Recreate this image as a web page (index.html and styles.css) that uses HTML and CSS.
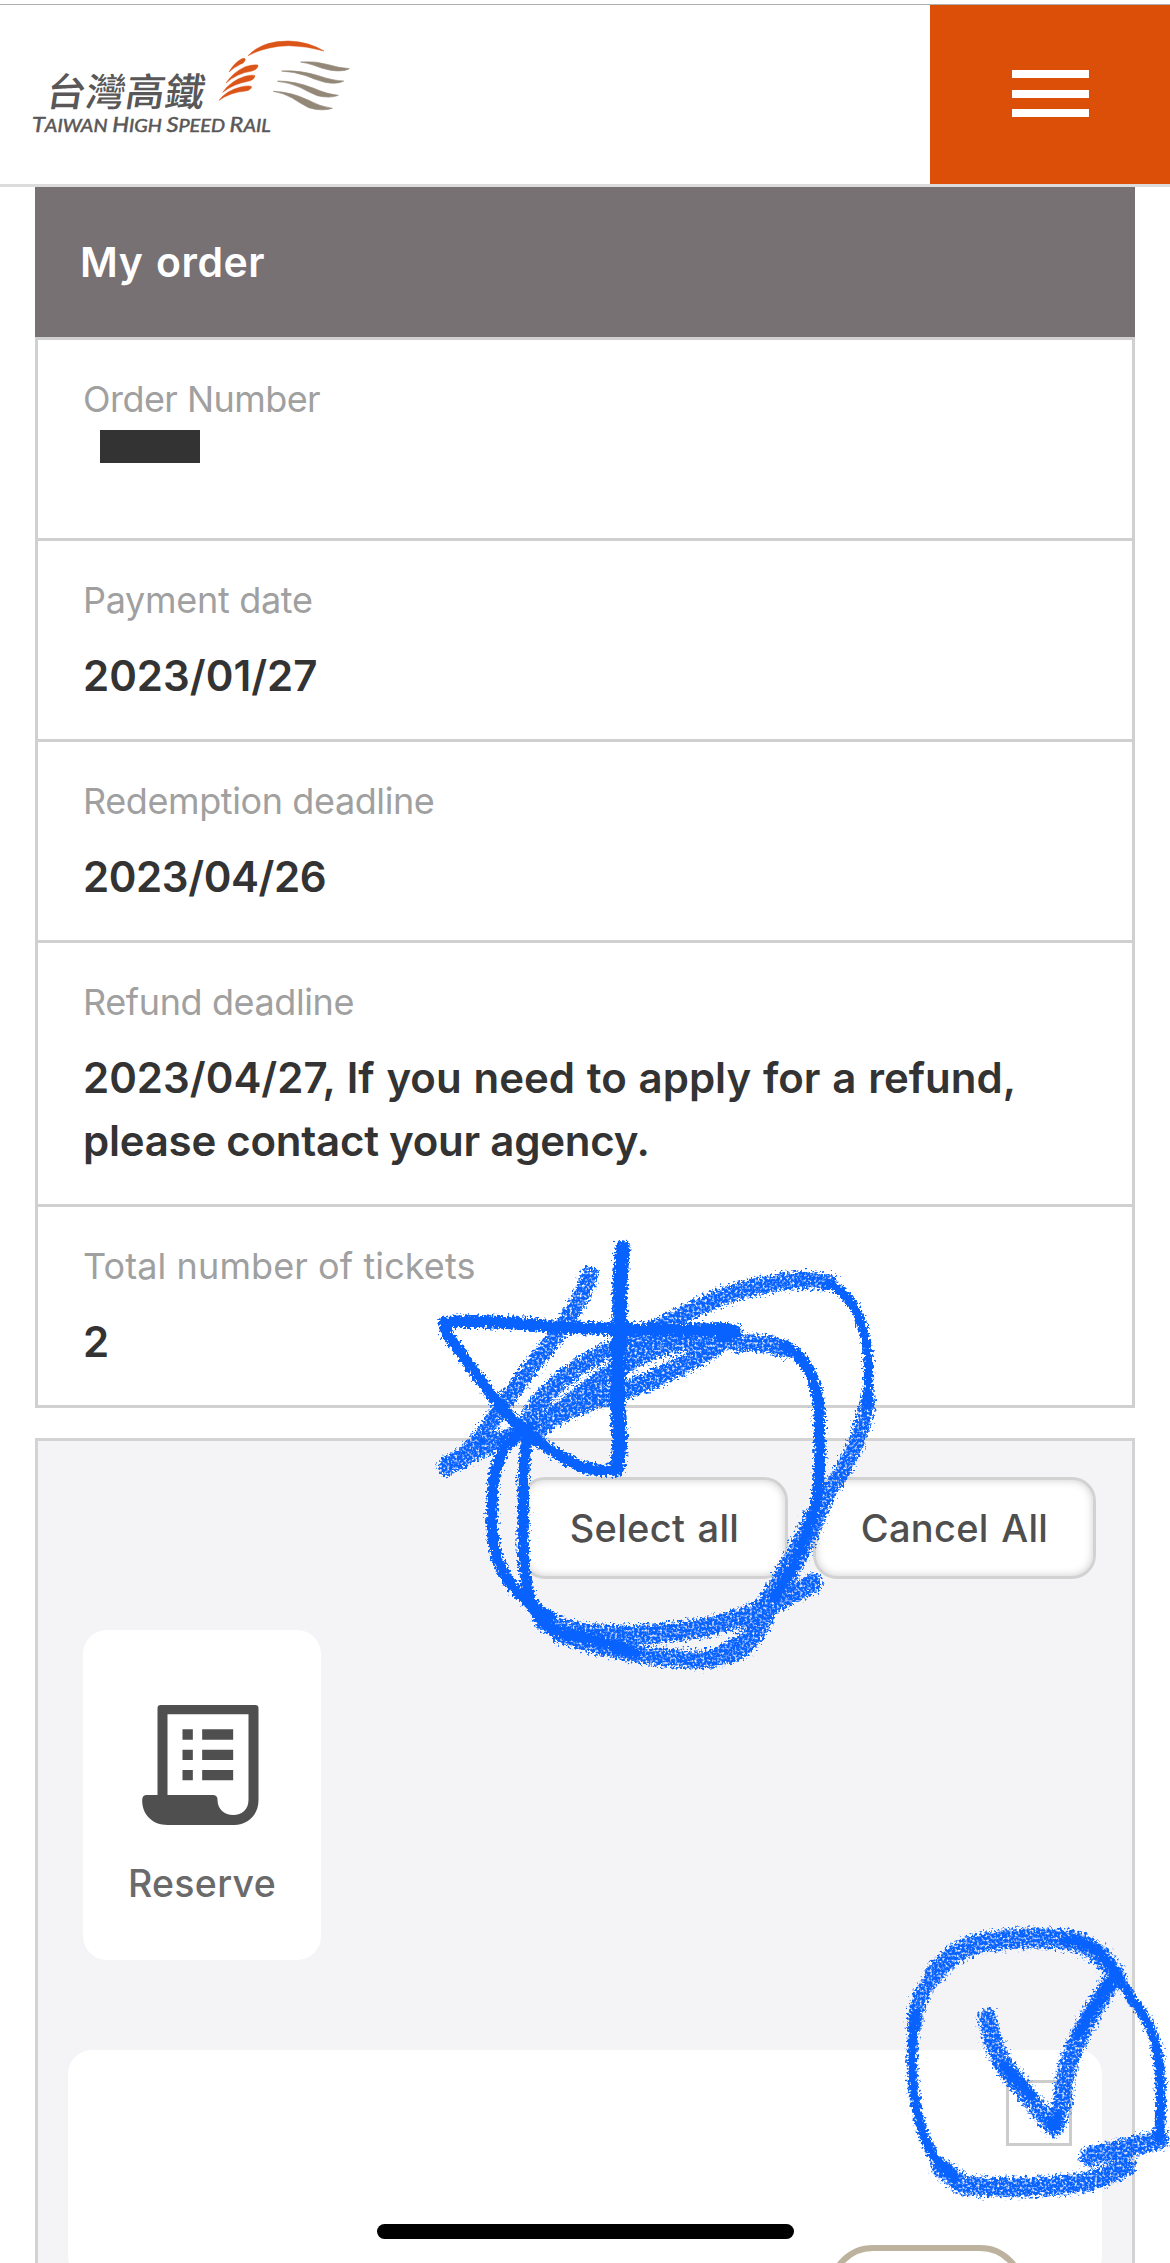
FILE: index.html
```
<!DOCTYPE html>
<html lang="en">
<head>
<meta charset="utf-8">
<title>My order</title>
<link rel="stylesheet" href="styles.css">
</head>
<body>
<div class="page">
  <header class="site-header">
    <svg class="logo" viewBox="0 0 1170 537" role="img" aria-label="Taiwan High Speed Rail">
      <g class="logo-text">
        <text class="logo-zh" transform="translate(134 302) skewX(-9)" textLength="474" lengthAdjust="spacingAndGlyphs">台灣高鐵</text>
        <text class="logo-en" x="96" y="380" textLength="716" lengthAdjust="spacingAndGlyphs"><tspan class="cap">T</tspan>AIWAN <tspan class="cap">H</tspan>IGH <tspan class="cap">S</tspan>PEED <tspan class="cap">R</tspan>AIL</text>
      </g>
      <g transform="translate(0 -15)">
        <path class="swoosh-orange" d="M744 167Q786 122 866 123Q926 125 972 153Q922 138 866 137Q800 138 744 167ZM687 216Q702 189 724 177Q736 172 736 179Q732 190 721 193Q704 201 687 216ZM678 249Q699 217 736 200Q759 193 774 195Q774 208 756 213Q710 220 678 249ZM668 277Q693 242 735 229Q758 223 765 227Q763 240 744 244Q700 252 668 277ZM657 301Q680 271 722 261Q749 255 755 260Q753 270 737 273Q691 277 657 301Z"/>
        <path class="swoosh-gray" d="M902 186Q945 182 985 194Q1018 204 1048 206Q1030 216 992 211Q965 206 942 196Q922 189 902 186ZM845 213Q900 210 955 227Q998 242 1031 243Q1012 254 975 247Q945 239 918 227Q882 215 845 213ZM833 243Q885 243 939 264Q980 282 1015 286Q990 296 952 287Q925 276 900 262Q866 247 833 244ZM820 274Q874 276 924 300Q960 320 997 325Q967 335 926 323Q896 307 877 294Q850 279 820 274Z"/>
      </g>
    </svg>
    <button class="menu" aria-label="Menu"><span></span><span></span><span></span></button>
  </header>

  <main>
    <section class="order">
      <h1>My order</h1>
      <dl>
        <div class="row"><dt class="t-order">Order Number</dt><dd class="redacted"><span></span></dd></div>
        <div class="row"><dt class="t-pay">Payment date</dt><dd class="date-a">2023/01/27</dd></div>
        <div class="row"><dt class="t-redeem">Redemption deadline</dt><dd class="date-b">2023/04/26</dd></div>
        <div class="row"><dt class="t-redeem">Refund deadline</dt><dd><span class="line-a">2023/04/27, If you need to apply for a refund,</span><br><span class="line-b">please contact your agency.</span></dd></div>
        <div class="row"><dt class="t-total">Total number of tickets</dt><dd>2</dd></div>
      </dl>
    </section>

    <section class="tickets">
      <div class="actions">
        <button class="btn select">Select all</button>
        <button class="btn cancel">Cancel All</button>
      </div>
      <button class="reserve">
        <svg viewBox="0 0 350 360" aria-hidden="true">
          <path fill-rule="evenodd" d="M46 270V10Q46 0 56 0H339Q349 0 349 10V285C349 328 319 360 276 360H76C31 360 0 330 0 286Q0 270 14 270ZM76 28V270H212Q226 270 226 284C226 313 247 330 273 330C300 330 319 313 319 284V28Z"/>
          <path d="M121 73h31v31h-31zM180 73h93v31h-93zM121 134h31v31h-31zM180 134h93v31h-93zM121 195h31v31h-31zM180 195h93v31h-93z"/>
        </svg>
        <span>Reserve</span>
      </button>
      <article class="ticket">
        <span class="checkbox"></span>
        <span class="pill"></span>
      </article>
    </section>
  </main>

  <svg class="ink" viewBox="0 0 1170 2263" aria-hidden="true">
    <defs>
      <filter id="crayon" filterUnits="userSpaceOnUse" x="420" y="1220" width="750" height="1000" color-interpolation-filters="sRGB">
        <feTurbulence type="fractalNoise" baseFrequency="0.4" numOctaves="2" seed="4" result="n"/>
        <feDisplacementMap in="SourceGraphic" in2="n" scale="15" xChannelSelector="R" yChannelSelector="G" result="d"/>
        <feColorMatrix in="n" type="matrix" values="0 0 0 0 0  0 0 0 0 0  0 0 0 0 0  0 0 3 0 -0.55" result="m"/>
        <feComposite in="d" in2="m" operator="in"/>
      </filter>
      <filter id="firm" filterUnits="userSpaceOnUse" x="420" y="1220" width="750" height="1000" color-interpolation-filters="sRGB">
        <feTurbulence type="fractalNoise" baseFrequency="0.4" numOctaves="2" seed="9" result="n"/>
        <feDisplacementMap in="SourceGraphic" in2="n" scale="11" xChannelSelector="R" yChannelSelector="G"/>
      </filter>
    </defs>
    <g filter="url(#crayon)">
      <g transform="translate(401 1221) scale(.33333)">
        <path stroke-width="50" d="M566 162Q535 260 430 390Q330 510 270 605Q220 690 135 740"/>
        <path stroke-width="56" d="M140 735Q220 680 400 625Q480 565 640 520Q820 460 990 345"/>
        <path stroke-width="52" d="M380 600Q440 480 600 400Q790 310 900 255Q1000 205 1110 188Q1210 170 1280 185"/>
        <path stroke-width="54" d="M400 640Q560 480 740 395Q870 340 1000 355"/>
        <path stroke-width="50" d="M375 600Q520 400 700 365Q850 340 1000 335"/>
        <path stroke-width="66" d="M1240 890Q1190 1010 1100 1150Q1060 1270 980 1295"/>
        <path stroke-width="48" d="M1400 540Q1370 700 1290 800L1240 900"/>
        <path stroke-width="56" d="M430 1200Q520 1245 700 1240Q900 1240 1070 1170Q1160 1130 1235 1085"/>
        <path stroke-width="54" d="M480 1240Q690 1310 870 1315Q990 1320 1060 1240"/>
        <path stroke-width="50" d="M970 335L1010 370Q1080 355 1150 385"/>
      </g>
      <g transform="translate(861 1881) scale(.33333)">
        <path stroke-width="58" d="M740 250Q680 175 600 175Q480 165 400 180Q290 185 220 280M240 860L305 912Q440 925 560 915Q710 910 795 855M685 828L800 800L895 775"/>
        <path stroke-width="46" d="M220 280Q165 350 160 430"/>
        <path stroke-width="54" d="M380 410Q400 530 450 580Q520 670 580 740Q605 690 610 600Q630 480 765 280"/>
      </g>
    </g>
    <g filter="url(#firm)">
      <g transform="translate(401 1221) scale(.33333)">
        <path stroke-width="45" d="M666 80Q653 180 657 320Q645 480 652 600Q662 680 646 745"/>
        <path stroke-width="34" d="M646 745Q560 760 480 705Q360 640 270 520Q190 410 145 350Q130 330 130 303"/>
        <path stroke-width="38" d="M130 303Q300 298 460 318Q720 330 985 325"/>
        <path stroke-width="36" d="M960 345L1000 335"/>
        <path stroke-width="34" d="M1150 375Q1260 430 1255 620Q1263 760 1240 880"/>
        <path stroke-width="28" d="M1280 185Q1370 230 1392 350Q1410 430 1398 550"/>
        <path stroke-width="34" d="M350 635Q280 700 275 810Q265 960 295 1030Q340 1130 450 1190"/>
        <path stroke-width="34" d="M385 620Q362 720 368 870Q360 1030 385 1130Q420 1230 490 1240Q590 1250 700 1295"/>
        <path stroke-width="30" d="M1230 890Q1190 1030 1120 1130"/>
      </g>
      <g transform="translate(861 1881) scale(.33333)">
        <path stroke-width="30" d="M895 775Q905 640 893 540Q880 430 815 360Q780 290 735 240Q690 180 620 178M165 400Q145 510 158 620Q175 780 240 855L280 890"/>
        <path stroke-width="30" d="M765 280Q690 390 650 460M565 725L580 740L590 705M430 555L510 645"/>
      </g>
    </g>
  </svg>
  <div class="home-indicator"></div>
</div>
</body>
</html>
```
FILE: styles.css
```
* { box-sizing: border-box; }
body { margin: 0; background: #fff; font-family: Inter, "Liberation Sans", "Noto Sans CJK TC", sans-serif; }
button { font: inherit; margin: 0; padding: 0; border: 0; }
.page { position: relative; height: 2263px; overflow: hidden; padding-top: 4px; }

.site-header { display: flex; justify-content: space-between; height: 183px; border-top: 1px solid #b0b0b0; border-bottom: 3px solid #dcdcdc; }
.logo { width: 390px; height: 179px; }
.logo-text { fill: #595757; }
.logo-zh { font-family: "Noto Sans CJK TC", sans-serif; font-size: 116px; font-weight: 500; }
.logo-en { font-family: Lato, sans-serif; font-size: 53px; font-style: italic; font-weight: 400; stroke: #595757; stroke-width: 1.5px; }
.logo-en .cap { font-size: 63px; }
.swoosh-orange { fill: #db5418; stroke: #db5418; stroke-width: 1.5px; }
.swoosh-gray { fill: #938878; stroke: #938878; stroke-width: 2px; }
.menu { width: 240px; background: #db4f09; display: flex; flex-direction: column; align-items: center; justify-content: center; gap: 11.5px; padding-bottom: 2px; }
.menu span { width: 77px; height: 8px; background: #fff; }

main { padding: 0 35px; }
h1 { margin: 0; height: 150px; padding-left: 45px; background: #777173; color: #fff; font-size: 41px; line-height: 151px; font-weight: 600; letter-spacing: .5px; word-spacing: 2px; }
dl { margin: 0; border: 3px solid #d0d0d0; }
.row { padding: 32px 44px 32px 45px; }
.row + .row { border-top: 3px solid #d0d0d0; }
dt { color: #a0a0a0; font-size: 36px; line-height: 54px; font-weight: 400; white-space: nowrap; }
.t-order { letter-spacing: -.55px; }
.t-pay { letter-spacing: -.3px; }
.t-redeem { letter-spacing: -.4px; }
.t-total { letter-spacing: .1px; }
dd { margin: 17px 0 0; color: #333; font-size: 42px; line-height: 63px; font-weight: 600; white-space: nowrap; }
.date-b { letter-spacing: -.4px; }
.line-a { word-spacing: 1.2px; }
.line-b { letter-spacing: -.25px; }
.redacted { height: 80px; margin: 0; padding: 4px 17px; }
.redacted span { display: block; width: 100px; height: 33px; background: #333; }

.tickets { margin-top: 30px; height: 830px; border: 3px solid #d3d3d3; background: #f4f4f7; padding: 36px 30px 0; }
.actions { display: flex; justify-content: flex-end; gap: 25px; padding-right: 6px; }
.btn { height: 102px; border: 3px solid #d2d2d2; border-radius: 24px; background: #fff; color: #4f4f4f; font-size: 38px; font-weight: 500; letter-spacing: .3px; word-spacing: 2px; box-shadow: inset 0 0 9px #ccc; }
.select { width: 267px; }
.cancel { width: 283px; }
.reserve { width: 238px; height: 330px; margin: 51px 0 0 15px; border-radius: 24px; background: #fff; display: flex; flex-direction: column; align-items: center; padding-top: 75px; color: #6a6a6a; font-size: 37.5px; font-weight: 500; letter-spacing: .3px; }
.reserve svg { width: 117px; height: 120px; fill: #4f4f4f; margin-right: 3px; }
.reserve span { margin-top: 34px; line-height: 50px; }
.ticket { height: 230px; margin-top: 90px; border-radius: 24px; background: #fff; padding: 30px 30px 0; display: flex; flex-direction: column; align-items: flex-end; }
.checkbox { width: 66px; height: 66px; flex: none; border: 3px solid #ccc; }
.pill { width: 197px; height: 96px; flex: none; margin: 99px 47px 0 0; border: 6px solid #bdb29e; border-radius: 45px; }

.ink { position: absolute; left: 0; top: 0; width: 1170px; height: 2263px; pointer-events: none; }
.ink path { fill: none; stroke: #0862ff; stroke-linecap: round; stroke-linejoin: round; }
.home-indicator { position: absolute; left: 377px; top: 2224px; width: 417px; height: 15px; border-radius: 8px; background: #000; }
```
